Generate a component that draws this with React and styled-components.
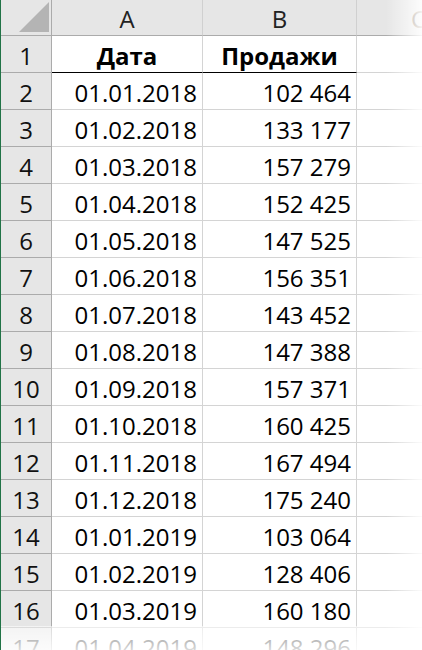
import React from "react";
import styled, { createGlobalStyle } from "styled-components";

const rows = [
  ["01.01.2018", "102 464"],
  ["01.02.2018", "133 177"],
  ["01.03.2018", "157 279"],
  ["01.04.2018", "152 425"],
  ["01.05.2018", "147 525"],
  ["01.06.2018", "156 351"],
  ["01.07.2018", "143 452"],
  ["01.08.2018", "147 388"],
  ["01.09.2018", "157 371"],
  ["01.10.2018", "160 425"],
  ["01.11.2018", "167 494"],
  ["01.12.2018", "175 240"],
  ["01.01.2019", "103 064"],
  ["01.02.2019", "128 406"],
  ["01.03.2019", "160 180"],
  ["01.04.2019", "148 296"],
];

const App = () => {
  return (
    <>
      <GlobalStyle />
      <Sheet>
        <Grid>
          <Corner>
            <svg width="30" height="30" viewBox="0 0 30 30">
              <polygon points="30,0 30,30 0,30" fill="#b4b4b4" />
            </svg>
          </Corner>
          <ColHead>A</ColHead>
          <ColHead>B</ColHead>
          <ColHead $faint>C</ColHead>

          <RowHead>1</RowHead>
          <Cell $bold $center $underline>Дата</Cell>
          <Cell $bold $center $underline>Продажи</Cell>
          <Cell />

          {rows.map(([date, sales], i) => (
            <React.Fragment key={date}>
              <RowHead>{i + 2}</RowHead>
              <Cell>{date}</Cell>
              <Cell>{sales}</Cell>
              <Cell />
            </React.Fragment>
          ))}
        </Grid>
        <FadeRight />
        <FadeBottom />
      </Sheet>
    </>
  );
};

export default App;

const GlobalStyle = createGlobalStyle`
  html, body {
    margin: 0;
    padding: 0;
    background: #fff;
    overflow: hidden;
  }
  body {
    font-family: "Open Sans", "Noto Sans", sans-serif;
  }
`;

const Sheet = styled.div`
  position: relative;
  width: 422px;
  height: 650px;
  overflow: hidden;
  border-left: 1px solid #217346;
  box-sizing: border-box;
`;

const Grid = styled.div`
  display: grid;
  grid-template-columns: 51px 151px 154px 124px;
  grid-template-rows: 36px;
  grid-auto-rows: 37px;
`;

const Corner = styled.div`
  box-sizing: border-box;
  background: #e6e6e6;
  border-right: 1px solid #ababab;
  border-bottom: 1px solid #ababab;
  display: flex;
  align-items: flex-end;
  justify-content: flex-end;
  padding: 0 2px 3px 0;
`;

const ColHead = styled.div`
  box-sizing: border-box;
  background: #e6e6e6;
  border-right: 1px solid #d0d0d0;
  border-bottom: 1px solid #ababab;
  display: flex;
  align-items: center;
  justify-content: center;
  font-size: 24px;
  color: ${(p) => (p.$faint ? "#8a7a6a" : "#222")};
  padding-top: 2px;
  overflow: hidden;
  white-space: nowrap;
`;

const RowHead = styled.div`
  box-sizing: border-box;
  background: #e6e6e6;
  border-right: 1px solid #ababab;
  border-bottom: 1px solid #ababab;
  display: flex;
  align-items: center;
  justify-content: center;
  font-size: 24px;
  color: #111;
  padding-top: 2px;
`;

const Cell = styled.div`
  box-sizing: border-box;
  border-right: 1px solid #d4d4d4;
  border-bottom: 1px solid ${(p) => (p.$underline ? "#000" : "#d4d4d4")};
  display: flex;
  align-items: center;
  justify-content: ${(p) => (p.$center ? "center" : "flex-end")};
  padding: 2px 5px 0 5px;
  font-size: 24px;
  font-weight: ${(p) => (p.$bold ? 700 : 400)};
  color: #000;
  white-space: nowrap;
`;

const FadeRight = styled.div`
  position: absolute;
  top: 0;
  right: 0;
  width: 36px;
  height: 100%;
  background: linear-gradient(to right, rgba(255, 255, 255, 0), rgba(255, 255, 255, 0.9));
  pointer-events: none;
`;

const FadeBottom = styled.div`
  position: absolute;
  left: 0;
  bottom: 0;
  width: 100%;
  height: 24px;
  background: linear-gradient(to bottom, rgba(255, 255, 255, 0.55), rgba(255, 255, 255, 0.85));
  pointer-events: none;
`;
